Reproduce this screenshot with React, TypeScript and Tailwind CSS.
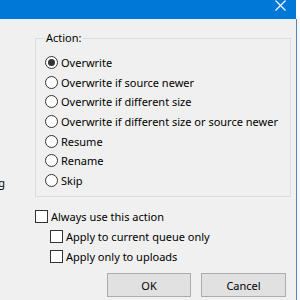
import React from "react";

const font = { fontFamily: '"Noto Sans", "Open Sans", sans-serif' };

function Radio({ checked, label }: { checked?: boolean; label: string }) {
  return (
    <div className="flex h-[19.6px] items-center">
      <span className="flex h-[13px] w-[13px] shrink-0 items-center justify-center rounded-full border border-[#333] bg-white">
        {checked && <span className="h-[7px] w-[7px] rounded-full bg-[#333]" />}
      </span>
      <span className="ml-[3px] whitespace-nowrap">{label}</span>
    </div>
  );
}

function Check({ label, indent }: { label: string; indent?: boolean }) {
  return (
    <div className={"flex h-[20px] items-center " + (indent ? "pl-[15px]" : "")}>
      <span className="h-[13px] w-[13px] shrink-0 border border-[#333] bg-white" />
      <span className="ml-[3px] whitespace-nowrap">{label}</span>
    </div>
  );
}

export default function App() {
  return (
    <div
      className="flex h-[300px] w-[300px] overflow-hidden bg-white text-[11px] leading-none text-black"
      style={font}
    >
      <div className="flex w-[296px] flex-col">
        <div className="flex h-[19px] shrink-0 justify-end bg-[#0078d7] pr-[10px]">
          <svg width="11" height="11" viewBox="0 0 11 11">
            <path d="M0.5 0.5 L10.5 10.5 M10.5 0.5 L0.5 10.5" stroke="white" strokeWidth="1.1" />
          </svg>
        </div>
        <div className="flex flex-1 bg-[#f0f0f0] pt-[19px]">
          <div className="flex w-[35px] shrink-0 justify-end overflow-hidden pt-[139px]">
            <span className="mr-[30px] whitespace-nowrap">Existing</span>
          </div>
          <div className="flex flex-col">
            <div className="flex h-[159px] w-[256px] flex-col border border-[#dcdcdc] pl-[9px]">
              <span className="-mt-[7px] self-start bg-[#f0f0f0] px-[1px]">Action:</span>
              <div className="mt-[10px] flex flex-col">
                <Radio checked label="Overwrite" />
                <Radio label="Overwrite if source newer" />
                <Radio label="Overwrite if different size" />
                <Radio label="Overwrite if different size or source newer" />
                <Radio label="Resume" />
                <Radio label="Rename" />
                <Radio label="Skip" />
              </div>
            </div>
            <div className="mt-[9px] flex flex-col">
              <Check label="Always use this action" />
              <Check indent label="Apply to current queue only" />
              <Check indent label="Apply only to uploads" />
            </div>
            <div className="mt-[7px] flex gap-[10px] pl-[72px]">
              <button className="flex h-[24px] w-[84px] items-center justify-center border border-[#adadad] bg-[#e1e1e1]">
                OK
              </button>
              <button className="flex h-[24px] w-[85px] items-center justify-center border border-[#adadad] bg-[#e1e1e1]">
                Cancel
              </button>
            </div>
          </div>
        </div>
      </div>
      <div className="flex w-[4px] flex-col">
        <div className="h-[19px]" />
        <div className="flex-1 border-l border-[#4a86c0] bg-[#f7f7f7]" />
      </div>
    </div>
  );
}
